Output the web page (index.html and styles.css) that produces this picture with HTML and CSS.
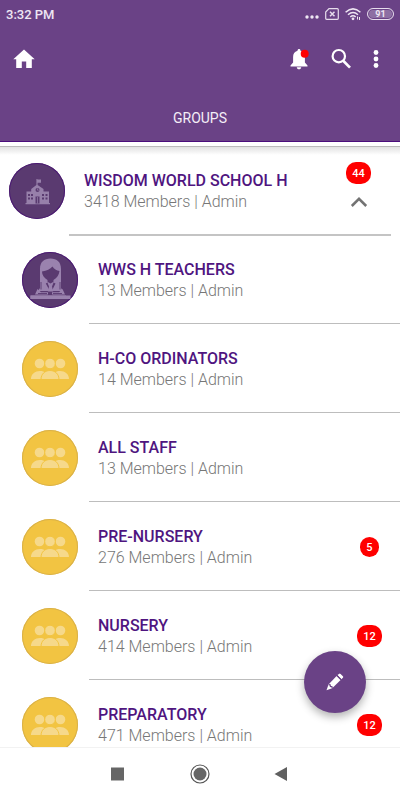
FILE: index.html
```html
<!DOCTYPE html>
<html lang="en">
<head>
<meta charset="utf-8">
<meta name="viewport" content="width=device-width, initial-scale=1">
<title>Groups</title>
<link rel="stylesheet" href="styles.css">
</head>
<body>
<svg class="defs" aria-hidden="true">
  <symbol id="people" viewBox="0 0 56 56">
    <g fill="#f6d98b">
      <circle cx="17.500" cy="22.500" r="4.800"/>
      <circle cx="38.500" cy="22.500" r="4.800"/>
      <path d="M9 38c0-5 4-8 9-8 2.500 0 4 .6 5.500 1.600C21 33 19.300 35 19 38z"/>
      <path d="M47 38c0-5-4-8-9-8-2.500 0-4 .6-5.500 1.600C35 33 36.700 35 37 38z"/>
    </g>
    <g fill="#f6d98b" stroke="#f2c442" stroke-width="1">
      <circle cx="28" cy="22.500" r="5.300"/>
      <path d="M19 38.500c0-5.500 4-9 9-9s9 3.500 9 9z"/>
    </g>
  </symbol>
</svg>
<header class="top">
  <div class="status">
    <span class="time">3:32 PM</span>
    <svg width="14" height="16" viewBox="0 0 14 16"><g fill="#eee6f3"><circle cx="2" cy="11" r="1.700"/><circle cx="7" cy="11" r="1.700"/><circle cx="12" cy="11" r="1.700"/></g></svg>
    <svg width="14" height="16" viewBox="0 0 14 16"><g fill="none" stroke="#e6dcec"><path d="M4 2.700h8.300q1 0 1 1v8.600q0 1-1 1H1.700q-1 0-1-1V6z" stroke-width="1.200"/><path d="M5 5.800l4.500 4.500M9.500 5.800L5 10.300" stroke-width="1.500"/></g></svg>
    <svg width="16" height="16" viewBox="0 0 16 16"><g fill="none" stroke="#eee6f3" stroke-width="1.500"><path d="M.6 6.200Q8-.5 15.400 6.200M3 8.700q5-4.400 10 0M5.300 11q2.700-2.400 5.400 0"/></g><circle cx="8" cy="12.800" r="1.400" fill="#eee6f3"/><path d="M12.500 13.500v-3M14.500 11v3" stroke="#eee6f3"/></svg>
    <span class="battery">91</span>
  </div>
  <div class="bar">
    <button class="icon" aria-label="Home"><svg width="22" height="22" viewBox="0 0 22 22"><path fill="#fff" d="M11 1.500L.3 11.300h2.900V20h5.600v-6.500h4.400V20h5.600v-8.700h2.900z"/></svg></button>
    <span class="grow"></span>
    <button class="icon bell" aria-label="Notifications"><svg width="22" height="22" viewBox="0 0 22 22"><path fill="#fff" d="M9.500 2.800C9.500.3 12.500.3 12.500 2.800c3.200.8 4.400 3.200 4.400 6.200v5.500l2.600 3v1H2.500v-1l2.600-3V9c0-3 1.300-5.400 4.400-6.200zM8.800 19.200h4.400c0 2.800-4.400 2.800-4.400 0z"/><circle cx="16.700" cy="5.800" r="4" fill="#f00"/></svg></button>
    <button class="icon search" aria-label="Search"><svg width="22" height="22" viewBox="0 0 22 22"><g fill="none" stroke="#fff"><circle cx="8.800" cy="8.200" r="6.200" stroke-width="2.200"/><path d="M13.200 12.800l6.800 6.800" stroke-width="2.700"/></g></svg></button>
    <button class="icon more" aria-label="More options"><svg width="6" height="22" viewBox="0 0 6 22"><g fill="#fff"><circle cx="3" cy="4.500" r="2.400"/><circle cx="3" cy="11" r="2.400"/><circle cx="3" cy="17.500" r="2.400"/></g></svg></button>
  </div>
  <nav class="tabs"><a href="#groups">GROUPS</a></nav>
</header>
<main class="content" id="groups">
  <div class="scroll">
    <section class="row parent">
      <div class="avatar purple"><svg width="56" height="56" viewBox="0 0 56 56"><g fill="#9780aa"><path d="M27.400 16h1v.5H32v3.300h-3.400V22l5.900 4v2.500H40V40h1v1.200H16.500V40h1V28.500h4.700V26l5.200-4z"/></g><g fill="#5a3b70"><circle cx="28.500" cy="27" r="2"/><path d="M19 31h2v2h-2zM22 31h2v2h-2zM19 34.500h2v2h-2zM22 34.500h2v2h-2zM33 31h2v2h-2zM36.500 31h2v2h-2zM33 34.500h2v2h-2zM36.500 34.500h2v2h-2zM26.500 33.500h4v7h-4z"/></g><path d="M28.500 34v6.500M28.500 25.500v1.700h1.200" fill="none" stroke="#9780aa" stroke-width=".7"/></svg></div>
      <div class="text"><h2>WISDOM WORLD SCHOOL H</h2><p>3418 Members | Admin</p></div>
      <div class="side"><span class="badge">44</span><button class="icon" aria-label="Collapse"><svg width="18" height="12" viewBox="0 0 18 12"><path d="M1.800 10L9 2.800 16.200 10" fill="none" stroke="#737373" stroke-width="2.500"/></svg></button></div>
    </section>
    <ul class="children">
      <li class="row">
        <div class="avatar purple"><svg width="56" height="56" viewBox="0 0 56 56"><g fill="#9a82ae"><path d="M18 36V17C18 10 22 6.500 28.500 6.500S39 10 39 17v19l2 3H16z"/><path d="M8.500 43.500h35.500V47H8.500z"/></g><path fill="#5a3a70" d="M20 19.500c5-.5 8-2.500 10.500-5 1.500 2.500 4 4 7 4.500-.5 4-2.500 7-6 9v2.500l2 1-3 6h-3.500l-3.200-6 1.700-1V28C22 26 20 23 20 19.500z"/><path fill="#9a82ae" d="M25 29.500l3.500 2 3.500-2-2 5 1.200 5h-5.400l1.200-5zM13 42.500l2.500-5.500 3.500 3.200h7v2.300zM43 42.500L40.500 37 37 40.200h-7v2.300zM8.500 43.500h40V47h-40z"/><path d="M19 30v7.500M38 30v7.500M16 41.500h9M31 41.500h9" fill="none" stroke="#5a3a70" stroke-width=".9"/></svg></div>
        <div class="text"><h2>WWS H TEACHERS</h2><p>13 Members | Admin</p></div>
      </li>
      <li class="row">
        <div class="avatar gold"><svg width="56" height="56"><use href="#people"/></svg></div>
        <div class="text"><h2>H-CO ORDINATORS</h2><p>14 Members | Admin</p></div>
      </li>
      <li class="row">
        <div class="avatar gold"><svg width="56" height="56"><use href="#people"/></svg></div>
        <div class="text"><h2>ALL STAFF</h2><p>13 Members | Admin</p></div>
      </li>
      <li class="row">
        <div class="avatar gold"><svg width="56" height="56"><use href="#people"/></svg></div>
        <div class="text"><h2>PRE-NURSERY</h2><p>276 Members | Admin</p></div>
        <div class="side"><span class="badge small">5</span></div>
      </li>
      <li class="row">
        <div class="avatar gold"><svg width="56" height="56"><use href="#people"/></svg></div>
        <div class="text"><h2>NURSERY</h2><p>414 Members | Admin</p></div>
        <div class="side"><span class="badge">12</span></div>
      </li>
      <li class="row">
        <div class="avatar gold"><svg width="56" height="56"><use href="#people"/></svg></div>
        <div class="text"><h2>PREPARATORY</h2><p>471 Members | Admin</p></div>
        <div class="side"><span class="badge">12</span></div>
      </li>
    </ul>
  </div>
  <button class="fab" aria-label="Compose"><svg width="20" height="20" viewBox="0 0 20 20"><g fill="#fff"><path d="M12.400 3.100l4 4.200 1.500-1.500q.8-.8 0-1.600L15.600 2q-.8-.8-1.600-.1z"/><path d="M11.600 3.900l4 4.200-8.400 8.200L1.500 18.300l2-5.900z"/></g><path d="M3.600 12.600l1.500.2.300 1.600 1.600.3.200 1.500M11.800 3.300l4.200 4.400" fill="none" stroke="#6a4286" stroke-width="1.200"/></svg></button>
</main>
<nav class="system" aria-label="System">
  <button class="icon" aria-label="Recent apps"><svg width="20" height="20" viewBox="0 0 20 20"><path fill="#666" d="M3 3.500h13v13H3z"/></svg></button>
  <button class="icon" aria-label="Home screen"><svg width="20" height="20" viewBox="0 0 20 20"><circle cx="10" cy="10" r="9" fill="none" stroke="#555" stroke-width="1.200"/><circle cx="10" cy="10" r="6.500" fill="#666"/></svg></button>
  <button class="icon" aria-label="Back"><svg width="20" height="20" viewBox="0 0 20 20"><path fill="#606060" d="M2.500 10L15 3v14z"/></svg></button>
</nav>
</body>
</html>
```
FILE: styles.css
```css
* {
  box-sizing: border-box;
}

body {
  margin: 0;
  height: 100vh;
  display: flex;
  flex-direction: column;
  font-family: Roboto, "Liberation Sans", sans-serif;
  background: #fff;
}

svg {
  display: block;
}

.defs {
  position: absolute;
  width: 0;
  height: 0;
}

h2,
p,
ul {
  margin: 0;
  padding: 0;
}

.icon {
  border: 0;
  padding: 0;
  background: none;
}

.top {
  flex: none;
  background: #6a4286;
  border-bottom: 1px solid #4b0d7c;
}

.status {
  display: flex;
  align-items: center;
  gap: 6px;
  height: 28px;
  padding: 0 6px;
  color: #eee6f3;
}

.time {
  flex: 1;
  font-size: 13px;
  font-weight: 500;
}

.battery {
  width: 27px;
  height: 12px;
  border: 1px solid #e6dcec;
  border-radius: 6px;
  background: #8d6fa3;
  box-shadow: inset 0 0 0 1px #6a4286;
  font-size: 9px;
  font-weight: 700;
  line-height: 10px;
  text-align: center;
}

.bar {
  display: flex;
  align-items: center;
  height: 62px;
  padding: 0 21px 0 13px;
}

.grow {
  flex: 1;
}

.search {
  margin: 0 21px 0 20px;
}

.tabs {
  height: 51px;
  display: flex;
  justify-content: center;
  padding-top: 18px;
}

.tabs a {
  color: #f4eef7;
  font-size: 14px;
  line-height: 20px;
  text-decoration: none;
}

.content {
  flex: 1;
  min-height: 0;
  position: relative;
  padding-top: 4px;
}

.scroll {
  height: 100%;
  overflow: hidden;
  border-top: 1px solid #bbb;
  background: linear-gradient(#e2e2e2, #fff 8px);
}

.row {
  display: flex;
  align-items: center;
  position: relative;
  height: 89px;
  padding: 4px 18px 4px 22px;
  gap: 20px;
  list-style: none;
}

.row::after {
  content: "";
  position: absolute;
  left: 89px;
  right: 0;
  bottom: 0;
  height: 1px;
  background: #bdbdbd;
}

.parent {
  padding: 0 29px 2px 9px;
  gap: 19px;
}

.parent::after {
  left: 69px;
  right: 9px;
  height: 2px;
  background: #c4c4c4;
}

.parent .side {
  padding-bottom: 12px;
}

.children {
  margin-top: -1px;
}

.avatar {
  flex: none;
  width: 56px;
  height: 56px;
  border-radius: 50%;
  overflow: hidden;
}

.purple {
  background: #5a3a70;
  box-shadow: inset 0 0 0 1px #4b1a73;
}

.gold {
  background: #f2c442;
  box-shadow: inset 0 0 0 1px #d9b149;
}

.text {
  flex: 1;
}

.text h2 {
  color: #4f1580;
  font-size: 16px;
  font-weight: 500;
  line-height: 21px;
}

.text p {
  color: #777;
  font-size: 16px;
  font-weight: 300;
  line-height: 21px;
}

.side {
  width: 25px;
  display: flex;
  flex-direction: column;
  align-items: center;
  gap: 12px;
}

.badge {
  width: 25px;
  height: 22px;
  border-radius: 10px;
  background: #f00;
  color: #fff;
  font-size: 11px;
  font-weight: 500;
  line-height: 23px;
  text-align: center;
}

.small {
  width: 19px;
  height: 20px;
  line-height: 21px;
}

.fab {
  position: absolute;
  right: 34px;
  bottom: 34px;
  width: 62px;
  height: 62px;
  display: grid;
  place-items: center;
  padding: 0;
  border: 0;
  border-radius: 50%;
  background: #6a4286;
  box-shadow: 0 4px 8px rgba(0, 0, 0, 0.3);
}

.system {
  flex: none;
  height: 53px;
  display: flex;
  justify-content: center;
  align-items: center;
  gap: 62px;
  border-top: 1px solid #f2f2f2;
  background: #fff;
}
```
